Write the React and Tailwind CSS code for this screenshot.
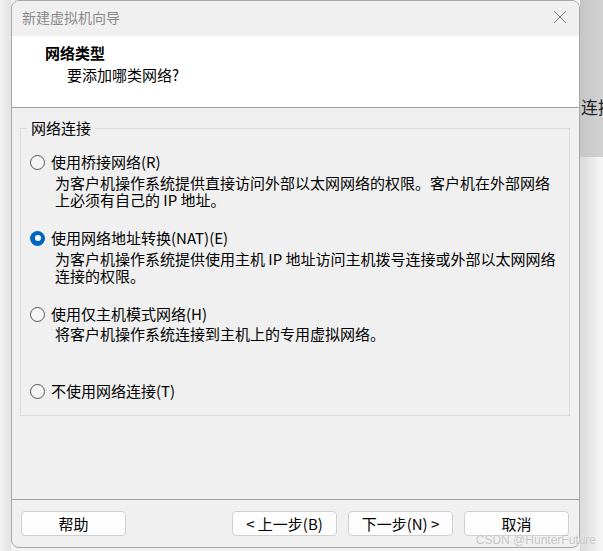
import React from "react";

const FONT = { fontFamily: '"Noto Sans CJK SC", "Noto Sans", sans-serif' };

function Radio({ checked }) {
  if (checked) {
    return (
      <span className="flex h-[15px] w-[15px] shrink-0 items-center justify-center rounded-full bg-[#0067c0]">
        <span className="h-[6px] w-[6px] rounded-full bg-white" />
      </span>
    );
  }
  return (
    <span className="h-[15px] w-[15px] shrink-0 rounded-full border border-[#555555] bg-[#f5f5f5]" />
  );
}

function Option({ checked, label, desc, className = "", descClass = "mt-[3px]" }) {
  return (
    <div className={className}>
      <div className="flex h-[18px] items-center">
        <Radio checked={checked} />
        <span className="ml-[6px] text-[15px] leading-[18px] text-black">{label}</span>
      </div>
      {desc && (
        <div className={`pl-[25px] text-[15px] leading-[17px] text-black ${descClass}`}>
          {desc.map((l, i) => (
            <div key={i}>{l}</div>
          ))}
        </div>
      )}
    </div>
  );
}

function Button({ children }) {
  return (
    <button className="flex h-[25px] w-[105px] items-center justify-center rounded-[4px] border border-[#d0d0d0] bg-[#fdfdfd] text-[15px] leading-[18px] text-black">
      {children}
    </button>
  );
}

export default function App() {
  return (
    <div className="relative flex h-[551px] w-[603px] overflow-hidden bg-[#f3f3f3]" style={FONT}>
      {/* left shadow strip */}
      <div className="h-full w-[11px] shrink-0 bg-gradient-to-r from-[#f3f3f3] to-[#e2e2e2]" />

      {/* window */}
      <div className="flex h-[548px] w-[569px] shrink-0 flex-col overflow-hidden rounded-[8px] border border-[#a8a8a8] bg-[#f0f0f0]">
        {/* title bar */}
        <div className="flex h-[35px] shrink-0 items-start justify-between bg-[#f0f0f0] pl-[10px] pr-[10px] pt-[7px]">
          <span className="text-[14px] leading-[18px] text-[#8a8a8a]">新建虚拟机向导</span>
          <svg width="14" height="14" viewBox="0 0 14 14" className="mr-[2px] mt-[2px]">
            <path d="M1 1 L13 13 M13 1 L1 13" stroke="#7d7d7d" strokeWidth="1" fill="none" />
          </svg>
        </div>
        {/* header */}
        <div className="h-[72px] shrink-0 border-b border-[#a0a0a0] bg-white pl-[33px] pt-[8px]">
          <div className="text-[15px] font-bold leading-[18px] text-black">网络类型</div>
          <div className="mt-[4px] pl-[22px] text-[15px] leading-[18px] text-black">要添加哪类网络?</div>
        </div>
        {/* body */}
        <div className="flex-1 pl-[8px] pr-[9px]">
          <fieldset className="mt-[11px] border border-[#dcdcdc] pb-[15px]">
            <legend className="ml-[6px] px-[4px] text-[15px] leading-[18px] text-black">网络连接</legend>
            <div className="pl-[9px]">
              <Option
                className="mt-[16px]"
                label="使用桥接网络(R)"
                desc={[
                  "为客户机操作系统提供直接访问外部以太网网络的权限。客户机在外部网络",
                  "上必须有自己的 IP 地址。",
                ]}
              />
              <Option
                className="mt-[21px]"
                checked
                label="使用网络地址转换(NAT)(E)"
                desc={[
                  "为客户机操作系统提供使用主机 IP 地址访问主机拨号连接或外部以太网网络",
                  "连接的权限。",
                ]}
              />
              <Option
                className="mt-[21px]"
                label="使用仅主机模式网络(H)"
                descClass="mt-[2px]"
                desc={["将客户机操作系统连接到主机上的专用虚拟网络。"]}
              />
              <Option className="mt-[40px]" label="不使用网络连接(T)" />
            </div>
          </fieldset>
        </div>
        {/* footer */}
        <div className="h-[48px] shrink-0 border-t border-[#a0a0a0] pl-[9px] pr-[10px] pt-[11px]">
          <div className="flex items-center">
            <Button>帮助</Button>
            <div className="flex-1" />
            <div className="flex gap-[11px]">
              <Button>&lt; 上一步(B)</Button>
              <Button>下一步(N) &gt;</Button>
              <Button>取消</Button>
            </div>
          </div>
        </div>
      </div>

      {/* right background strip */}
      <div className="flex h-full flex-1 flex-col overflow-hidden">
        <div className="flex h-[157px] shrink-0 flex-col bg-gradient-to-r from-[#c6c6c6] to-[#d2d2d2] pt-[97px]">
          <span className="whitespace-nowrap pl-[1px] text-[17px] leading-[20px] text-[#222]">连接</span>
        </div>
        <div className="flex-1 bg-gradient-to-r from-[#dadada] to-[#f7f7f7]" />
      </div>

      {/* watermark */}
      <div
        className="absolute bottom-[4px] right-[7px] text-[12px] leading-[14px] text-[#c4c4c4]"
        style={{ fontFamily: '"Liberation Sans", sans-serif', textShadow: "0 0 1px #fff" }}
      >
        CSDN @HunterFuture
      </div>
    </div>
  );
}
